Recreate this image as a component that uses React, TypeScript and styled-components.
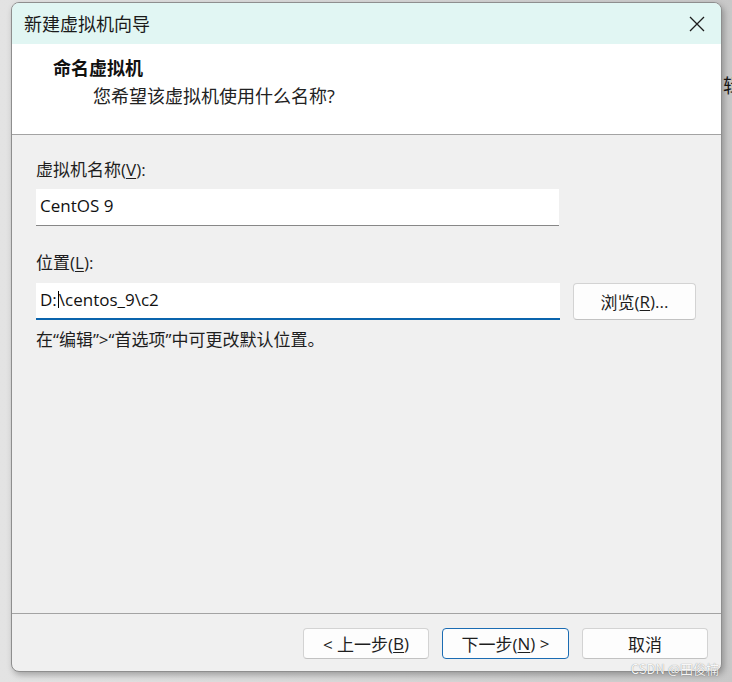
import styled, { createGlobalStyle } from "styled-components";

const GlobalStyle = createGlobalStyle`
  html, body {
    margin: 0;
    padding: 0;
  }
  body {
    width: 732px;
    height: 682px;
    overflow: hidden;
    font-family: "Open Sans", "Noto Sans CJK SC", sans-serif;
  }
`;

const Desktop = styled.div`
  position: relative;
  width: 732px;
  height: 682px;
  box-sizing: border-box;
  padding: 2px 0 0 11px;
  overflow: hidden;
  background: linear-gradient(90deg, #e3e3e3 0%, #d6d6d6 55%, #c8c8c8 100%);
`;

/* part of a window behind the dialog */
const BehindGlyph = styled.span`
  position: absolute;
  left: 723px;
  top: 71px;
  font-family: "Noto Sans CJK SC", sans-serif;
  font-size: 19px;
  color: #161616;
`;

const Window = styled.div`
  position: relative;
  z-index: 1;
  width: 711px;
  height: 670px;
  box-sizing: border-box;
  display: flex;
  flex-direction: column;
  border: 1px solid #8e8e8e;
  border-radius: 8px;
  overflow: hidden;
  background: #f0f0f0;
  box-shadow: 2px 3px 6px rgba(0, 0, 0, 0.28);
`;

const TitleBar = styled.div`
  height: 41px;
  flex-shrink: 0;
  display: flex;
  align-items: center;
  justify-content: space-between;
  padding: 0 16px 2px 12px;
  box-sizing: border-box;
  background: #e1f6f3;
`;

const TitleText = styled.span`
  font-family: "Noto Sans CJK SC", sans-serif;
  font-size: 18px;
  color: #1a1a1a;
`;

const CloseButton = styled.div`
  width: 16px;
  height: 16px;
  display: flex;
  margin-top: 3px;
`;

const Header = styled.div`
  height: 91px;
  flex-shrink: 0;
  box-sizing: border-box;
  background: #ffffff;
  border-bottom: 1px solid #a3a3a3;
  padding: 10px 0 0 41px;
`;

const HeaderTitle = styled.div`
  font-family: "Noto Sans CJK SC", sans-serif;
  font-weight: 700;
  font-size: 18px;
  line-height: 26px;
  color: #111;
`;

const HeaderSub = styled.div`
  margin-top: 3px;
  padding-left: 40px;
  font-size: 18px;
  line-height: 26px;
  color: #222;
`;

const Body = styled.div`
  flex: 1;
  padding: 23px 0 0 24px;
`;

const Label = styled.div<{ $gap?: number }>`
  margin-top: ${(p) => p.$gap ?? 0}px;
  font-size: 17px;
  line-height: 24px;
  color: #1e1e1e;
`;

const Key = styled.span`
  text-decoration: underline;
  text-underline-offset: 2px;
  text-decoration-thickness: 1px;
`;

const Field = styled.div<{ $focused?: boolean; $width: number }>`
  width: ${(p) => p.$width}px;
  height: 37px;
  box-sizing: border-box;
  display: flex;
  align-items: center;
  padding: 0 0 3px 4px;
  background: #ffffff;
  border-bottom: ${(p) => (p.$focused ? "2px solid #0a64ad" : "1px solid #878787")};
  font-size: 17px;
  color: #111;
  white-space: pre;
`;

const Caret = styled.span`
  display: inline-block;
  width: 1px;
  height: 17px;
  margin: 0 0 0 1px;
  background: #000;
`;

const FieldRow = styled.div<{ $gap: number }>`
  margin-top: ${(p) => p.$gap}px;
  display: flex;
  gap: 13px;
`;

const Button = styled.div<{ $primary?: boolean; $width: number; $height: number }>`
  width: ${(p) => p.$width}px;
  height: ${(p) => p.$height}px;
  box-sizing: border-box;
  display: flex;
  align-items: center;
  justify-content: center;
  padding-bottom: 1px;
  border: 1px solid ${(p) => (p.$primary ? "#1b6cb3" : "#d3d3d3")};
  border-bottom-color: ${(p) => (p.$primary ? "#1b6cb3" : "#c2c2c2")};
  border-radius: 4px;
  background: #fdfdfd;
  font-size: 17px;
  color: #1e1e1e;
  white-space: pre;
`;

const Hint = styled.div`
  margin-top: 8px;
  font-size: 17px;
  line-height: 24px;
  color: #1e1e1e;
`;

const Footer = styled.div`
  height: 58px;
  flex-shrink: 0;
  box-sizing: border-box;
  border-top: 1px solid #a3a3a3;
  display: flex;
  justify-content: flex-end;
  align-items: flex-start;
  gap: 13px;
  padding: 14px 13px 0 0;
`;

const Watermark = styled.span`
  position: absolute;
  z-index: 2;
  right: 13px;
  bottom: 6px;
  font-family: "Noto Sans CJK SC", sans-serif;
  font-size: 13px;
  line-height: 14px;
  color: rgba(255, 255, 255, 0.95);
  text-shadow: 0 0 1px rgba(0, 0, 0, 0.5);
`;

export default function App() {
  return (
    <Desktop>
      <GlobalStyle />
      <BehindGlyph>辑</BehindGlyph>
      <Window>
        <TitleBar>
          <TitleText>新建虚拟机向导</TitleText>
          <CloseButton>
            <svg width="16" height="16" viewBox="0 0 16 16">
              <path d="M1 1 L15 15 M15 1 L1 15" stroke="#1c1c1c" strokeWidth="1.3" fill="none" />
            </svg>
          </CloseButton>
        </TitleBar>
        <Header>
          <HeaderTitle>命名虚拟机</HeaderTitle>
          <HeaderSub>您希望该虚拟机使用什么名称?</HeaderSub>
        </Header>
        <Body>
          <Label>
            虚拟机名称(<Key>V</Key>):
          </Label>
          <FieldRow $gap={7}>
            <Field $width={523}>CentOS 9</Field>
          </FieldRow>
          <Label $gap={25}>
            位置(<Key>L</Key>):
          </Label>
          <FieldRow $gap={8}>
            <Field $width={524} $focused>
              D:<Caret />\centos_9\c2
            </Field>
            <Button $width={123} $height={37}>
              浏览(<Key>R</Key>)...
            </Button>
          </FieldRow>
          <Hint>在“编辑”&gt;“首选项”中可更改默认位置。</Hint>
        </Body>
        <Footer>
          <Button $width={126} $height={31}>
            &lt; 上一步(<Key>B</Key>)
          </Button>
          <Button $width={127} $height={31} $primary>
            下一步(<Key>N</Key>) &gt;
          </Button>
          <Button $width={126} $height={31}>
            取消
          </Button>
        </Footer>
      </Window>
      <Watermark>CSDN @田俊楠</Watermark>
    </Desktop>
  );
}
